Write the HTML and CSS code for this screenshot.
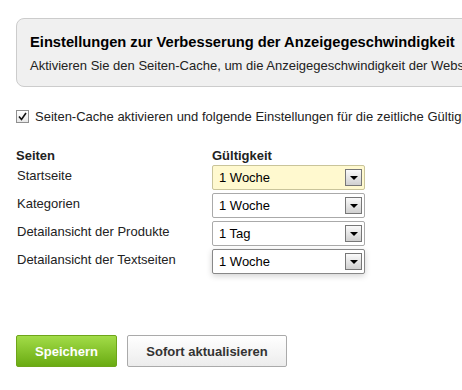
FILE: index.html
```html
<!DOCTYPE html>
<html lang="de">
<head>
    <meta charset="UTF-8">
    <title>Seiten-Cache</title>
    <link rel="stylesheet" href="styles.css">
</head>
<body>
    <div class="page">
        <!-- Info box -->
        <div class="info-box">
            <h2>Einstellungen zur Verbesserung der Anzeigegeschwindigkeit</h2>
            <p>Aktivieren Sie den Seiten-Cache, um die Anzeigegeschwindigkeit der Webseite zu verbessern.</p>
        </div>

        <label class="check-row">
            <span class="checkbox">
                <svg width="9" height="9" viewBox="0 0 9 9"><path d="M1 4.5 L3.5 7.5 L8 1" fill="none" stroke="#111" stroke-width="1.6"/></svg>
            </span>
            <span>Seiten-Cache aktivieren und folgende Einstellungen für die zeitliche Gültigkeit verwenden</span>
        </label>

        <!-- Cache table -->
        <div class="cache-table">
            <div class="head">Seiten</div>
            <div class="head">Gültigkeit</div>

            <div class="label">Startseite</div>
            <div class="select highlight"><span>1 Woche</span><span class="arrow"></span></div>

            <div class="label">Kategorien</div>
            <div class="select"><span>1 Woche</span><span class="arrow"></span></div>

            <div class="label">Detailansicht der Produkte</div>
            <div class="select"><span>1 Tag</span><span class="arrow"></span></div>

            <div class="label">Detailansicht der Textseiten</div>
            <div class="select focus"><span>1 Woche</span><span class="arrow"></span></div>
        </div>

        <div class="buttons">
            <button class="btn btn-green">Speichern</button>
            <button class="btn btn-grey">Sofort aktualisieren</button>
        </div>
    </div>
</body>
</html>
```

FILE: styles.css
```css
html, body {
    margin: 0;
    overflow: hidden;
}
body {
    font-family: "Liberation Sans", Arial, sans-serif;
    font-size: 13px;
    color: #222;
    background: #fff;
}
.page {
    padding: 18px 0 0 16px;
    width: 560px;
}
.info-box {
    background: #f0f0f0;
    border: 1px solid #ccc;
    border-radius: 8px;
    padding: 15px 13px 12px;
    height: 40px;
}
.info-box h2 {
    margin: 0 0 8px;
    font-size: 14.7px;
    color: #000;
    white-space: nowrap;
}
.info-box p {
    margin: 0;
    white-space: nowrap;
}
.check-row {
    display: flex;
    align-items: center;
    margin-top: 22px;
    white-space: nowrap;
}
.checkbox {
    display: flex;
    align-items: center;
    justify-content: center;
    width: 11px;
    height: 11px;
    border: 1px solid #8f8f8f;
    background: linear-gradient(#fff, #e8e8e8);
    margin-right: 6px;
}
.cache-table {
    display: grid;
    grid-template-columns: 196px 153px;
    grid-template-rows: 20px;
    grid-auto-rows: 25px;
    row-gap: 3px;
    margin-top: 18px;
}
.cache-table .head {
    font-weight: bold;
    color: #222;
    padding-top: 6px;
}
.cache-table .label {
    padding-top: 3px;
    padding-left: 1px;
}
.select {
    display: flex;
    align-items: center;
    justify-content: space-between;
    border: 1px solid #aaa;
    border-radius: 2px;
    background: #fff;
    padding: 0 2px 0 6px;
    color: #000;
    box-sizing: border-box;
}
.select.highlight {
    background: #fff9cf;
    border-color: #c9c49a;
}
.select.focus {
    border-color: #888;
    box-shadow: 0 2px 6px rgba(0, 0, 0, 0.18);
}
.arrow {
    width: 15px;
    height: 15px;
    border: 1px solid #777;
    background: linear-gradient(#fafafa, #d0d0d0);
    position: relative;
}
.arrow::after {
    content: "";
    position: absolute;
    left: 4px;
    top: 6px;
    border-left: 4px solid transparent;
    border-right: 4px solid transparent;
    border-top: 4px solid #000;
}
.buttons {
    display: flex;
    gap: 10px;
    margin-top: 61px;
}
.btn {
    height: 32px;
    font-family: "Liberation Sans", Arial, sans-serif;
    font-size: 13px;
    font-weight: bold;
    border-radius: 2px;
    cursor: pointer;
}
.btn-green {
    width: 101px;
    color: #fff;
    border: 1px solid #6ea51a;
    background: linear-gradient(#a2dc48, #6aab12);
}
.btn-grey {
    width: 160px;
    color: #333;
    border: 1px solid #aaa;
    background: linear-gradient(#fff, #ececec);
}
```
